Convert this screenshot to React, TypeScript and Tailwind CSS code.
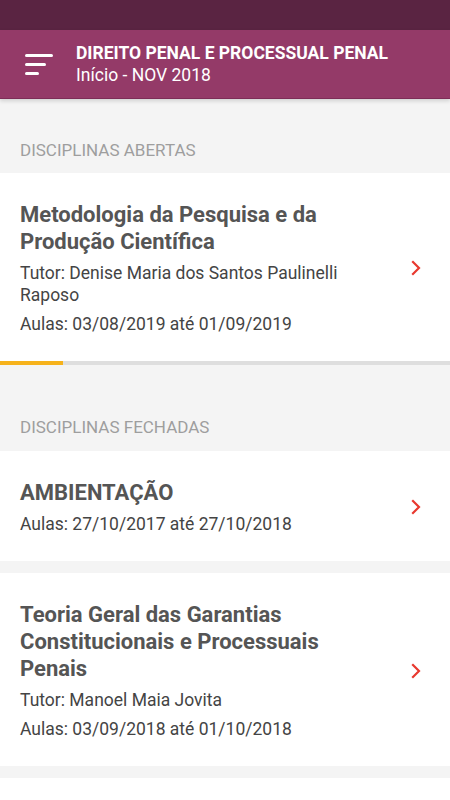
import React from "react";

type Disciplina = {
  titulo: string;
  tutor?: string;
  aulas: string;
  progresso?: number;
};

const abertas: Disciplina[] = [
  {
    titulo: "Metodologia da Pesquisa e da Produção Científica",
    tutor: "Denise Maria dos Santos Paulinelli Raposo",
    aulas: "03/08/2019 até 01/09/2019",
    progresso: 14,
  },
];

const fechadas: Disciplina[] = [
  { titulo: "AMBIENTAÇÃO", aulas: "27/10/2017 até 27/10/2018" },
  {
    titulo: "Teoria Geral das Garantias Constitucionais e Processuais Penais",
    tutor: "Manoel Maia Jovita",
    aulas: "03/09/2018 até 01/10/2018",
  },
];

function Chevron() {
  return (
    <svg width="12" height="16" viewBox="0 0 12 16" fill="none">
      <path d="M3 2l6 6-6 6" stroke="#e8392f" strokeWidth="2.2" strokeLinecap="square" />
    </svg>
  );
}

function Card({ d }: { d: Disciplina }) {
  return (
    <div className="bg-white">
      <div className="flex items-center pl-5 pt-[28px] pb-[26px]">
        <div className="w-[360px]">
          <div className="text-[22px] leading-[27px] font-bold text-[#555555]">{d.titulo}</div>
          {d.tutor && (
            <div className="mt-[7px] text-[17.5px] leading-[22px] text-[#444444]">Tutor: {d.tutor}</div>
          )}
          <div className="mt-[7px] text-[17.5px] leading-[22px] text-[#444444]">Aulas: {d.aulas}</div>
        </div>
        <div className="flex-1 flex justify-end pr-[28px]">
          <Chevron />
        </div>
      </div>
      {d.progresso !== undefined && (
        <div className="h-1 bg-[#dedede]">
          <div className="h-1 bg-[#f6b21b]" style={{ width: `${d.progresso}%` }} />
        </div>
      )}
    </div>
  );
}

export default function App() {
  return (
    <div
      className="w-[450px] h-[800px] overflow-hidden bg-[#f4f4f4]"
      style={{ fontFamily: "Roboto, 'Liberation Sans', sans-serif" }}
    >
      <div className="h-[30px] bg-[#5a2442]" />
      <div className="relative z-10 h-[69px] bg-[#943a68] border-b border-[#7d2d57] shadow-[0_2px_4px_rgba(0,0,0,0.15)] flex items-center">
        <div className="w-[76px] pl-[25px] flex flex-col gap-[6px]">
          <div className="h-[3px] w-[28px] bg-white rounded-full" />
          <div className="h-[3px] w-[21px] bg-white rounded-full" />
          <div className="h-[3px] w-[14px] bg-white rounded-full" />
        </div>
        <div className="text-white">
          <div className="text-[17.5px] leading-[22px] font-bold">DIREITO PENAL E PROCESSUAL PENAL</div>
          <div className="text-[17.5px] leading-[22px]">Início - NOV 2018</div>
        </div>
      </div>

      <div className="h-[74px] flex items-end pl-5 pb-3">
        <span className="text-[17px] leading-[22px] text-[#9e9e9e]">DISCIPLINAS ABERTAS</span>
      </div>
      {abertas.map((d) => (
        <Card key={d.titulo} d={d} />
      ))}

      <div className="h-[86px] flex items-end pl-5 pb-[13px]">
        <span className="text-[17px] leading-[22px] text-[#9e9e9e]">DISCIPLINAS FECHADAS</span>
      </div>
      <div className="flex flex-col gap-3">
        {fechadas.map((d) => (
          <Card key={d.titulo} d={d} />
        ))}
        <div className="h-10 bg-white" />
      </div>
    </div>
  );
}
